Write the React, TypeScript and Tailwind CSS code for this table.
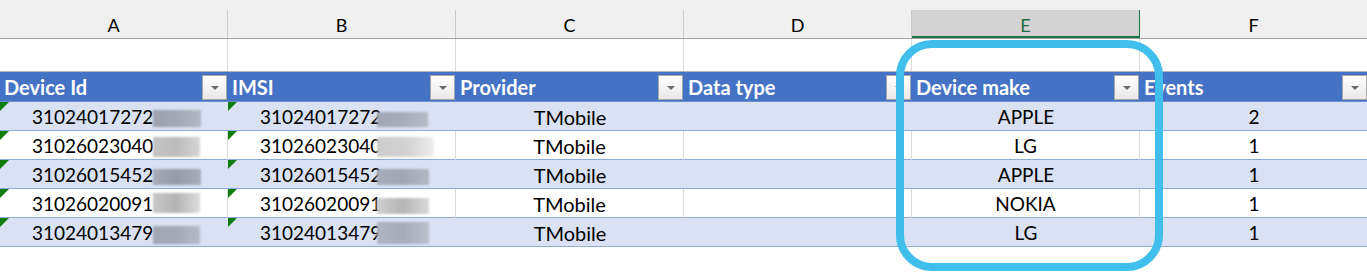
const font = { fontFamily: 'Lato, "Open Sans", sans-serif' }

const letters = ['A', 'B', 'C', 'D', 'E', 'F']
const headers = ['Device Id', 'IMSI', 'Provider', 'Data type', 'Device make', 'Events']

interface Row {
  id: string
  imsi: string
  make: string
  events: string
  banded: boolean
  blurA: string
  blurB: string
}

const rows: Row[] = [
  {
    id: '31024017272',
    imsi: '31024017272',
    make: 'APPLE',
    events: '2',
    banded: true,
    blurA: 'w-[48px] h-[17px] mt-[3px] from-[#9da1ad] via-[#a4a8b4] to-[#b3b7c3]',
    blurB: 'w-[51px] h-[15px] mt-[5px] from-[#a3a7b3] via-[#a8acb8] to-[#b8bcc8]'
  },
  {
    id: '31026023040',
    imsi: '31026023040',
    make: 'LG',
    events: '1',
    banded: false,
    blurA: 'w-[47px] h-[20px] mt-[1px] from-[#c4c4c4] via-[#bcbcbc] to-[#d6d6d6]',
    blurB: 'w-[57px] h-[20px] mt-[1px] from-[#cdcdcd] via-[#d2d2d2] to-[#eeeeee]'
  },
  {
    id: '31026015452',
    imsi: '31026015452',
    make: 'APPLE',
    events: '1',
    banded: true,
    blurA: 'w-[48px] h-[16px] mt-[3px] from-[#a6aab6] via-[#979ba7] to-[#a9adb9]',
    blurB: 'w-[52px] h-[16px] mt-[3px] from-[#a8acb8] via-[#a2a6b2] to-[#b4b8c4]'
  },
  {
    id: '31026020091',
    imsi: '31026020091',
    make: 'NOKIA',
    events: '1',
    banded: false,
    blurA: 'w-[47px] h-[20px] mt-[-2px] from-[#c8c8c8] via-[#b4b4b4] to-[#dedede]',
    blurB: 'w-[52px] h-[16px] mt-[3px] from-[#d0d0d0] via-[#b6b6b6] to-[#d8d8d8]'
  },
  {
    id: '31024013479',
    imsi: '31024013479',
    make: 'LG',
    events: '1',
    banded: true,
    blurA: 'w-[47px] h-[18px] mt-[3px] from-[#a4a8b4] via-[#a6aab6] to-[#b6bac6]',
    blurB: 'w-[52px] h-[22px] mt-[-1px] from-[#b0b4c0] via-[#a8acb8] to-[#bcc0cc]'
  }
]

function FilterButton() {
  return (
    <div className="mb-[1px] mr-[1px] flex h-[25px] w-[25px] shrink-0 items-center justify-center self-end border border-[#a6a6a6] bg-linear-to-b from-[#ffffff] to-[#e9e9e9]">
      <div className="h-0 w-0 border-x-[4px] border-t-[4px] border-x-transparent border-t-[#6a6a6a]" />
    </div>
  )
}

function Flag() {
  return (
    <div className="absolute left-0 top-0 h-0 w-0 border-r-[9px] border-t-[9px] border-r-transparent border-t-[#0e7d0e]" />
  )
}

function IdCell({ text, blur, overlap, banded }: { text: string; blur: string; overlap: boolean; banded: boolean }) {
  return (
    <div
      className={`relative flex h-full items-center pl-[32px] ${banded ? '' : 'border-r border-[#d9d9d9]'}`}
    >
      <Flag />
      <span>{text}</span>
      <span
        className={`inline-block shrink-0 bg-linear-to-r blur-[1px] ${overlap ? 'ml-[-4px]' : ''} ${blur}`}
      />
    </div>
  )
}

export default function App() {
  return (
    <div className="relative h-[272px] w-[1367px] overflow-hidden bg-white text-black" style={font}>
      {/* column letters */}
      <div className="bg-[#f0f0f0] pt-[10px]">
        <div className="grid grid-cols-[228px_228px_228px_228px_228px_228px] border-b border-[#a3a3a3]">
          {letters.map((l) =>
            l === 'E' ? (
              <div
                key={l}
                className="flex h-[28px] items-center justify-center border-b-2 border-r border-[#1e7145] bg-[#d3d3d3] pt-[4px] text-[18px] text-[#1e6b40]"
              >
                {l}
              </div>
            ) : (
              <div
                key={l}
                className="flex h-[28px] items-center justify-center border-r border-[#c9c9c9] pt-[2px] text-[18px]"
              >
                {l}
              </div>
            )
          )}
        </div>
      </div>

      {/* blank row 1 */}
      <div className="grid h-[33px] grid-cols-[228px_228px_228px_228px_228px_228px] border-b border-[#b4b4b4]">
        {letters.map((l) => (
          <div key={l} className="border-r border-[#dadada]" />
        ))}
      </div>

      {/* table header */}
      <div className="grid h-[30px] grid-cols-[228px_228px_228px_228px_228px_228px] border-b border-[#6f8fd0] bg-[#4472c4] text-[20px] font-bold text-white">
        {headers.map((h) => (
          <div key={h} className="flex h-[29px] items-center justify-between pl-[4px]">
            <span className="pt-[1px]">{h}</span>
            <FilterButton />
          </div>
        ))}
      </div>

      {/* data rows */}
      {rows.map((r, i) => (
        <div
          key={i}
          className={`grid h-[29px] grid-cols-[228px_228px_228px_228px_228px_228px] border-b border-[#8eaadb] text-[19px] ${
            r.banded ? 'bg-[#d9e1f2]' : 'bg-white'
          }`}
        >
          <IdCell text={r.id} blur={r.blurA} overlap={false} banded={r.banded} />
          <IdCell text={r.imsi} blur={r.blurB} overlap={true} banded={r.banded} />
          <div className={`flex items-center justify-center text-[20px] ${r.banded ? '' : 'border-r border-[#d9d9d9]'}`}>TMobile</div>
          <div className={r.banded ? '' : 'border-r border-[#d9d9d9]'} />
          <div className={`flex items-center justify-center ${r.banded ? '' : 'border-r border-[#d9d9d9]'}`}>{r.make}</div>
          <div className="flex items-center justify-center">{r.events}</div>
        </div>
      ))}

      {/* highlight around Device make */}
      <div className="pointer-events-none absolute left-[896px] top-[40px] h-[231px] w-[267px] rounded-[36px] border-[8px] border-[#41bfec]" />
    </div>
  )
}
